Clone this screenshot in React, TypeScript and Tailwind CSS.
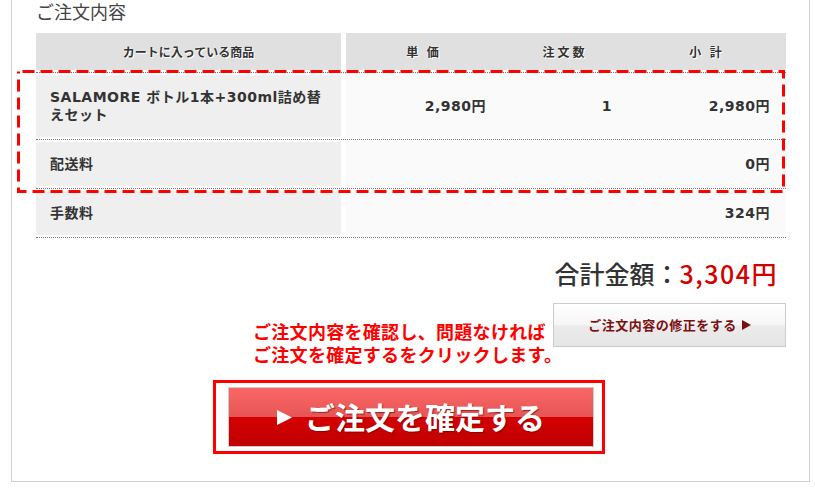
import React from 'react';

const items = [
  { name: ['SALAMORE ボトル1本+300ml詰め替', 'えセット'], price: '2,980円', qty: '1', subtotal: '2,980円', tall: true },
  { name: ['配送料'], price: '', qty: '', subtotal: '0円', tall: false },
  { name: ['手数料'], price: '', qty: '', subtotal: '324円', tall: false },
];

function Play({ className }: { className?: string }) {
  return (
    <svg viewBox="0 0 10 12" className={className} fill="currentColor" preserveAspectRatio="none">
      <path d="M0 0 L10 6 L0 12 Z" />
    </svg>
  );
}

export default function App() {
  return (
    <div className="h-[489px] w-[815px] overflow-hidden bg-white font-['Noto_Sans_CJK_JP',sans-serif]">
      <div className="ml-[11px] h-[482px] w-[799px] border-x border-b border-[#cfcfcf] pl-[24px] pr-[23px]">
        {/* title */}
        <h2 className="pt-[1px] text-[18px] leading-[20px] text-[#444]">ご注文内容</h2>

        {/* order table */}
        <div className="relative mt-[12px] w-[750px] text-[14px] font-bold text-[#333]">
          <div className="border-b border-dotted border-[#777] pb-[2px]">
            <div className="flex h-[37px] items-center text-[12px] [text-shadow:0_0_2px_#fff,1px_1px_0_#fff]">
              <div className="flex h-full w-[305px] items-center justify-center bg-[#e0e0e0]">カートに入っている商品</div>
              <div className="ml-[5px] flex h-full flex-1 items-center bg-[#e0e0e0]">
                <div className="w-[156px] text-center tracking-[3px]">単 価</div>
                <div className="w-[126px] text-center tracking-[3px]">注文数</div>
                <div className="flex-1 text-center tracking-[3px]">小 計</div>
              </div>
            </div>
          </div>

          {items.map((row, i) => (
            <div key={i} className="border-b border-dotted border-[#777] py-[2px] font-['DejaVu_Sans','Noto_Sans_CJK_JP',sans-serif] tracking-[0.5px]">
              <div className={`flex ${row.tall ? 'h-[62px]' : 'h-[44px]'}`}>
                <div className="flex w-[305px] items-center bg-[#efefef] pl-[14px] leading-[18px]">
                  <div>
                    {row.name.map((l, j) => (
                      <div key={j}>{l}</div>
                    ))}
                  </div>
                </div>
                <div className="ml-[5px] flex flex-1 items-center bg-[#fafafa]">
                  <div className="w-[156px] pr-[16px] text-right">{row.price}</div>
                  <div className="w-[126px] pr-[16px] text-right">{row.qty}</div>
                  <div className="flex-1 pr-[16px] text-right">{row.subtotal}</div>
                </div>
              </div>
            </div>
          ))}

          {/* red dashed highlight over the first two rows */}
          <svg className="pointer-events-none absolute left-[-19px] top-[37px]" width="768" height="123">
            <rect x="1.5" y="1.5" width="765" height="120" fill="none" stroke="#f00" strokeWidth="3" strokeDasharray="12 6" strokeDashoffset="-4" />
          </svg>
        </div>

        {/* total */}
        <div className="mt-[20px] pr-[8px] text-right text-[25px] font-medium leading-[30px] text-[#333]">
          合計金額：<span className="tracking-[1.5px] text-[#d40000]">3,304円</span>
        </div>

        {/* note + edit button */}
        <div className="mt-[15px] grid grid-cols-[300px_233px] pl-[217px]">
          <div className="mt-[17px] whitespace-nowrap text-[18px] font-bold leading-[23px] tracking-[0.3px] text-[#f00]">
            <div>ご注文内容を確認し、問題なければ</div>
            <div>ご注文を確定するをクリックします。</div>
          </div>
          <button className="flex h-[44px] items-center justify-center gap-[5px] border border-[#cccccc] bg-[linear-gradient(to_bottom,#ffffff_0%,#f5f5f5_50%,#ebebeb_52%,#e5e5e5_100%)] text-[13px] font-bold tracking-[0.5px] text-[#7a1010]">
            ご注文内容の修正をする
            <Play className="h-[10px] w-[9px]" />
          </button>
        </div>

        {/* confirm */}
        <div className="ml-[177px] mt-[14px] w-[392px] border-[3px] border-[#f00] pb-[4px] pl-[12px] pt-[4px]">
          <button className="flex h-[60px] w-[366px] items-center justify-center gap-[13px] border border-[#cccccc] bg-[linear-gradient(to_bottom,#fb6767_0%,#e65555_50%,#d40000_50%,#c00000_100%)] text-[30px] font-bold text-white [text-shadow:1px_1px_1px_rgba(90,0,0,0.6)]">
            <Play className="h-[15px] w-[15px]" />
            <span className="mt-[-2px]">ご注文を確定する</span>
          </button>
        </div>
      </div>
    </div>
  );
}
